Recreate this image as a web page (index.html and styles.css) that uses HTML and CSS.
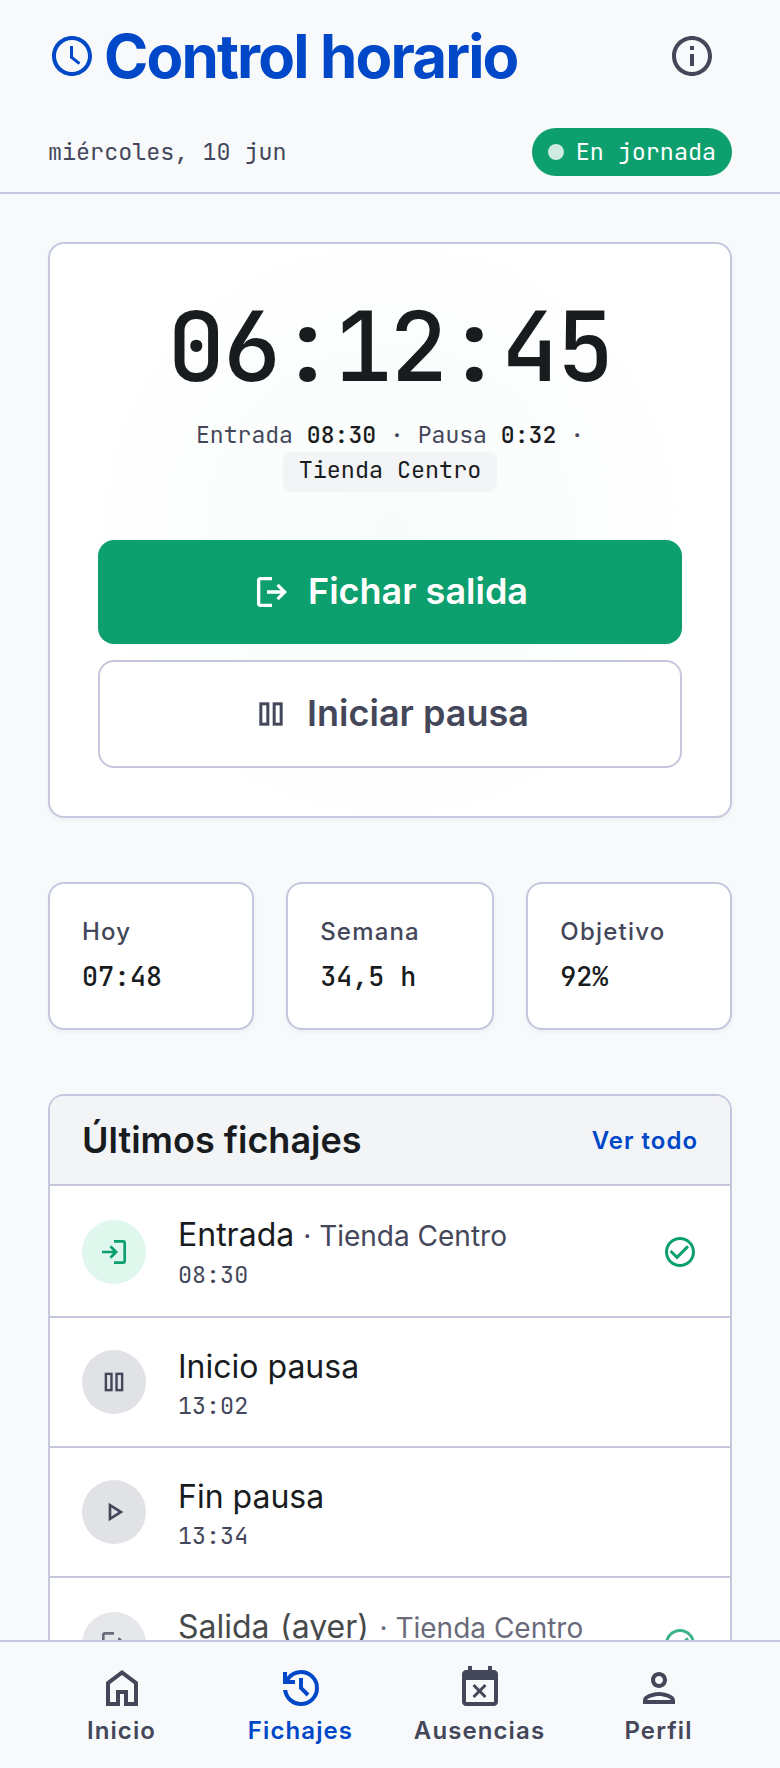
FILE: index.html
```html
<!DOCTYPE html>
<html lang="es">
<head>
<meta charset="utf-8">
<title>Control horario</title>
<link rel="stylesheet" href="styles.css">
</head>
<body>
<header class="top">
  <div class="top-row">
    <h1 class="brand">
      <svg viewBox="0 0 24 24"><path d="M11.99 2C6.47 2 2 6.48 2 12s4.47 10 9.99 10C17.52 22 22 17.52 22 12S17.52 2 11.99 2zM12 20c-4.42 0-8-3.58-8-8s3.58-8 8-8 8 3.58 8 8-3.58 8-8 8zm.5-13H11v6l4.3 3.4.9-1.2-3.7-3z"/></svg>
      <span>Control horario</span>
    </h1>
    <button class="info" aria-label="Información">
      <svg class="ic-48" viewBox="0 0 24 24"><path d="M11 7h2v2h-2zm0 4h2v6h-2zm1-9C6.48 2 2 6.48 2 12s4.48 10 10 10 10-4.48 10-10S17.52 2 12 2zm0 18c-4.41 0-8-3.59-8-8s3.59-8 8-8 8 3.59 8 8-3.59 8-8 8z"/></svg>
    </button>
  </div>
  <div class="sub-row">
    <span class="date">miércoles, 10 jun</span>
    <span class="badge"><i class="dot"></i>En jornada</span>
  </div>
</header>

<main class="page">
  <section class="hero">
    <div class="clock">06:12:45</div>
    <p class="meta">Entrada <b>08:30</b> · Pausa <b>0:32</b> · <span class="chip">Tienda Centro</span></p>
    <button class="btn btn-primary">
      <svg class="ic-40" viewBox="0 0 24 24"><path d="M5 21q-.825 0-1.412-.587Q3 19.825 3 19V5q0-.825.588-1.413Q4.175 3 5 3h7v2H5v14h7v2Zm11-4-1.375-1.45 2.55-2.55H9v-2h8.175l-2.55-2.55L16 7l5 5Z"/></svg>
      <span class="btn-text">Fichar salida</span>
    </button>
    <button class="btn btn-outline">
      <svg class="ic-40 pause" viewBox="0 0 24 24"><rect x="5.9" y="5.9" width="4.2" height="12.2"/><rect x="13.9" y="5.9" width="4.2" height="12.2"/></svg>
      <span class="btn-text">Iniciar pausa</span>
    </button>
  </section>

  <section class="stats">
    <div class="stat"><div class="stat-label">Hoy</div><div class="stat-value">07:48</div></div>
    <div class="stat"><div class="stat-label">Semana</div><div class="stat-value">34,5 h</div></div>
    <div class="stat"><div class="stat-label">Objetivo</div><div class="stat-value">92%</div></div>
  </section>

  <section class="list">
    <div class="list-head">
      <h2>Últimos fichajes</h2>
      <a class="more">Ver todo</a>
    </div>
    <div class="row row-tall">
      <span class="circle circle-green"><svg class="ic-32" viewBox="0 0 24 24"><path d="M12 21v-2h7V5h-7V3h7q.825 0 1.413.587Q21 4.175 21 5v14q0 .825-.587 1.413Q19.825 21 19 21Zm-2-4-1.375-1.45 2.55-2.55H3v-2h8.175l-2.55-2.55L10 7l5 5Z"/></svg></span>
      <div class="row-text">
        <div class="row-title">Entrada <small>· Tienda Centro</small></div>
        <div class="row-time">08:30</div>
      </div>
      <svg class="ok" viewBox="0 0 24 24"><path d="M16.59 7.58 10 14.17l-3.59-3.58L5 12l5 5 8-8zM12 2C6.48 2 2 6.48 2 12s4.48 10 10 10 10-4.48 10-10S17.52 2 12 2zm0 18c-4.42 0-8-3.58-8-8s3.58-8 8-8 8 3.58 8 8-3.58 8-8 8z"/></svg>
    </div>
    <div class="row">
      <span class="circle"><svg class="ic-32 pause" viewBox="0 0 24 24"><rect x="5.9" y="5.9" width="4.2" height="12.2"/><rect x="13.9" y="5.9" width="4.2" height="12.2"/></svg></span>
      <div class="row-text">
        <div class="row-title">Inicio pausa</div>
        <div class="row-time">13:02</div>
      </div>
    </div>
    <div class="row">
      <span class="circle"><svg class="ic-32" viewBox="0 0 24 24"><path d="M8 19V5l11 7-11 7Zm2-3.65L15.25 12 10 8.65v6.7Z"/></svg></span>
      <div class="row-text">
        <div class="row-title">Fin pausa</div>
        <div class="row-time">13:34</div>
      </div>
    </div>
    <div class="row row-tall row-old">
      <span class="circle"><svg class="ic-32" viewBox="0 0 24 24"><path d="M5 21q-.825 0-1.412-.587Q3 19.825 3 19V5q0-.825.588-1.413Q4.175 3 5 3h7v2H5v14h7v2Zm11-4-1.375-1.45 2.55-2.55H9v-2h8.175l-2.55-2.55L16 7l5 5Z"/></svg></span>
      <div class="row-text">
        <div class="row-title">Salida (ayer) <small>· Tienda Centro</small></div>
        <div class="row-time">18:05</div>
      </div>
      <svg class="ok" viewBox="0 0 24 24"><path d="M16.59 7.58 10 14.17l-3.59-3.58L5 12l5 5 8-8zM12 2C6.48 2 2 6.48 2 12s4.48 10 10 10 10-4.48 10-10S17.52 2 12 2zm0 18c-4.42 0-8-3.58-8-8s3.58-8 8-8 8 3.58 8 8-3.58 8-8 8z"/></svg>
    </div>
  </section>
</main>

<nav class="tabs">
  <a class="tab">
    <svg class="ic-48" viewBox="0 0 24 24"><path d="M6 19h3v-6h6v6h3v-9l-6-4.5L6 10v9zm-2 2V9l8-6 8 6v12h-7v-6h-2v6H4z"/></svg>
    <span>Inicio</span>
  </a>
  <a class="tab tab-on">
    <svg class="ic-48" viewBox="0 0 24 24"><path d="M12 21q-3.45 0-6.012-2.288Q3.425 16.425 3.05 13H5.1q.35 2.6 2.313 4.3Q9.375 19 12 19q2.925 0 4.962-2.038Q19 14.925 19 12t-2.038-4.962Q14.925 5 12 5q-1.725 0-3.225.8T6.25 8H9v2H3V4h2v2.35q1.275-1.6 3.113-2.475Q9.95 3 12 3q3.75 0 6.375 2.625T21 12q0 3.75-2.625 6.375T12 21Zm2.8-4.8L11 12.4V7h2v4.6l3.2 3.2Z"/></svg>
    <span>Fichajes</span>
  </a>
  <a class="tab">
    <svg class="ic-48" viewBox="0 0 24 24"><path d="M9.31 17l2.44-2.44L14.19 17l1.06-1.06-2.44-2.44 2.44-2.44L14.19 10l-2.44 2.44L9.31 10l-1.06 1.06 2.44 2.44-2.44 2.44L9.31 17zM19 3h-1V1h-2v2H8V1H6v2H5c-1.11 0-1.99.9-1.99 2L3 19c0 1.1.89 2 2 2h14c1.1 0 2-.9 2-2V5c0-1.1-.9-2-2-2zm0 16H5V8h14v11z"/></svg>
    <span>Ausencias</span>
  </a>
  <a class="tab">
    <svg class="ic-48" viewBox="0 0 24 24"><path d="M12 6c1.1 0 2 .9 2 2s-.9 2-2 2-2-.9-2-2 .9-2 2-2m0 10c2.7 0 5.8 1.29 6 2H6c.23-.72 3.31-2 6-2m0-12C9.79 4 8 5.79 8 8s1.79 4 4 4 4-1.79 4-4-1.79-4-4-4zm0 10c-2.67 0-8 1.34-8 4v2h16v-2c0-2.66-5.33-4-8-4z"/></svg>
    <span>Perfil</span>
  </a>
</nav>
</body>
</html>
```
FILE: styles.css
```css
* { box-sizing: border-box; }
html, body { margin: 0; height: 100%; }
body {
  background: #f8f9fb;
  color: #191c1e;
  font-family: Inter, "Liberation Sans", sans-serif;
  overflow: hidden;
}
svg { fill: currentColor; display: block; flex: none; }
.ic-48 { width: 48px; height: 48px; }
.ic-40 { width: 40px; height: 40px; }
.ic-32 { width: 32px; height: 32px; }
.pause { fill: none; stroke: currentColor; stroke-width: 1.8; }

.top { padding: 16px 48px 16px; border-bottom: 2px solid #c5c8dc; }
.top-row { display: flex; align-items: center; justify-content: space-between; height: 80px; }
.brand {
  display: flex; align-items: center; gap: 8px; margin: 0;
  color: #0048c8; font-size: 60px; font-weight: 700; letter-spacing: -1.85px; line-height: 1;
}
.brand svg { width: 48px; height: 48px; }
.info { width: 80px; height: 80px; display: flex; align-items: center; justify-content: center; padding: 0; border: 0; background: none; color: #44475a; }
.sub-row { display: flex; align-items: center; justify-content: space-between; margin-top: 32px; }
.date, .badge, .meta, .row-time, .stat-value, .clock {
  font-family: "JetBrains Mono", "DejaVu Sans Mono", "Liberation Mono", monospace;
}
.date { font-size: 23.4px; color: #44475a; padding-bottom: 2px; }
.badge {
  display: flex; align-items: center; gap: 12px; height: 48px; padding: 0 16px 2px;
  background: #0e9f6e; color: #fff; border-radius: 24px; font-size: 23.4px;
}
.dot { width: 16px; height: 16px; border-radius: 50%; background: #cfeadf; margin-top: 2px; }

.page { padding: 48px 48px 0; }
.hero {
  padding: 48px; border: 2px solid #c5c8dc; border-radius: 16px;
  background: radial-gradient(circle at 50% 50%, rgba(14, 159, 110, .03) 0%, rgba(14, 159, 110, 0) 75%), #fff;
  box-shadow: 0 2px 4px rgba(30, 40, 80, .05);
  text-align: center;
}
.clock { font-size: 96px; line-height: 110px; font-weight: 500; letter-spacing: -2px; }
.meta { margin: 15px 0 48px; font-size: 23.1px; line-height: 35px; color: #44475a; }
.meta b { font-weight: 500; color: #191c1e; }
.chip { display: inline-block; padding: 0 16px; height: 40px; line-height: 36px; font-size: 23.4px; background: #f3f4f6; color: #191c1e; border-radius: 8px; }
.btn {
  display: flex; align-items: center; justify-content: center; gap: 16px; width: 100%;
  border-radius: 16px; font-family: inherit; font-size: 36px; font-weight: 600;
}
.btn-text { padding-bottom: 3px; }
.btn-primary { height: 104px; background: #0e9f6e; color: #fff; border: 0; margin-bottom: 16px; }
.btn-outline { height: 108px; background: #fff; color: #44475a; border: 2px solid #c5c8dc; }

.stats { display: grid; grid-template-columns: 1fr 1.01fr 1fr; gap: 32.5px; margin-top: 64px; }
.stat { height: 148px; padding: 32px; border: 2px solid #c5c8dc; border-radius: 16px; background: #fff; box-shadow: 0 2px 4px rgba(30, 40, 80, .05); }
.stat-label { font-size: 24px; line-height: 32px; font-weight: 500; color: #44475a; letter-spacing: 1.2px; }
.stat-value { margin-top: 11px; font-size: 26.7px; line-height: 36px; font-weight: 500; }

.list { margin-top: 64px; border: 2px solid #c5c8dc; border-bottom: 0; border-radius: 16px 16px 0 0; background: #fff; overflow: hidden; }
.list-head { display: flex; align-items: center; justify-content: space-between; height: 90px; padding: 0 32px; background: #f3f4f6; border-bottom: 2px solid #c5c8dc; }
.list-head h2 { margin: 0; font-size: 36px; font-weight: 600; }
.more { font-size: 24px; font-weight: 600; color: #0048c8; letter-spacing: 1px; }
.row { display: flex; align-items: center; gap: 32px; height: 130px; padding: 0 32px; border-bottom: 2px solid #c5c8dc; }
.row-tall { height: 132px; }
.row-tall .circle, .row-tall .ok { margin-top: 2px; }
.circle { width: 64px; height: 64px; border-radius: 50%; background: #e1e2e6; color: #44475a; display: flex; align-items: center; justify-content: center; flex: none; }
.circle-green { background: #dff7ec; color: #0e9f6e; }
.row-text { flex: 1; }
.row-title { font-size: 32px; line-height: 44px; }
.row-title small { font-size: 28px; color: #44475a; }
.row-time { margin-top: 3px; font-size: 23.4px; line-height: 28px; color: #44475a; }
.ok { width: 36px; height: 36px; color: #0e9f6e; }
.row-old { opacity: .8; }
.row-old .row-title { word-spacing: 1.5px; }
.row-old .row-title small { word-spacing: 0; }

.tabs {
  position: fixed; left: 0; right: 0; bottom: 0; height: 128px;
  display: grid; grid-template-columns: repeat(4, 1fr); padding: 0 32px;
  background: #f8f9fb; border-top: 2px solid #c5c8dc;
}
.tab { display: flex; flex-direction: column; align-items: center; padding-top: 22px; gap: 3px; color: #44475a; font-size: 24px; font-weight: 600; letter-spacing: 1.1px; }
.tab span { line-height: 32px; }
.tab-on { color: #0048c8; }
```
